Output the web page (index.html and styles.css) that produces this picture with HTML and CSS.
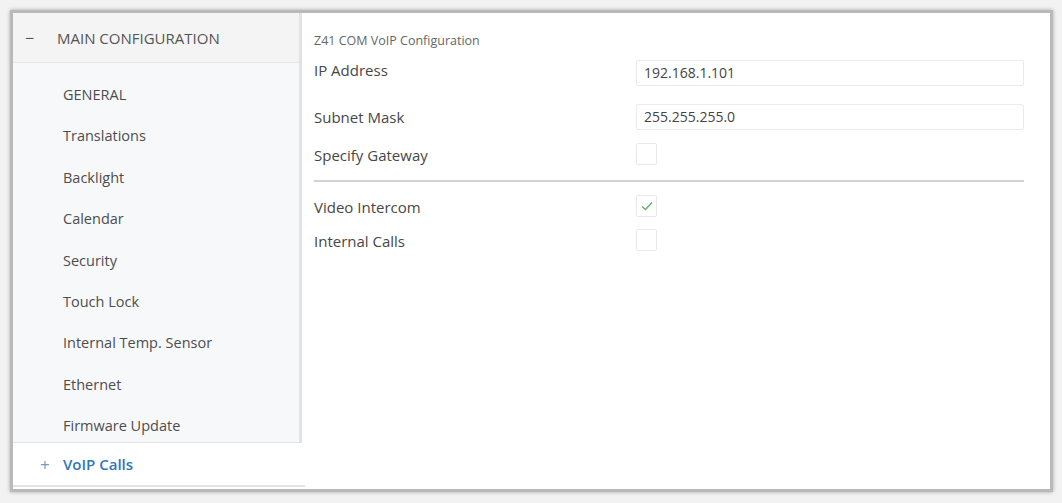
FILE: index.html
```html
<!DOCTYPE html>
<html>
<head>
<meta charset="utf-8">
<link rel="stylesheet" href="styles.css">
</head>
<body>
<div class="frame">
  <aside class="sidebar">
    <div class="tree">
      <div class="tree-head"><span class="toggle">−</span><span class="head-label">MAIN CONFIGURATION</span></div>
      <ul class="tree-items">
        <li>GENERAL</li>
        <li>Translations</li>
        <li>Backlight</li>
        <li>Calendar</li>
        <li>Security</li>
        <li>Touch Lock</li>
        <li>Internal Temp. Sensor</li>
        <li>Ethernet</li>
        <li>Firmware Update</li>
      </ul>
    </div>
    <div class="voip"><span class="toggle plus">+</span><span class="voip-label">VoIP Calls</span></div>
  </aside>
  <main class="content">
    <div class="title">Z41 COM VoIP Configuration</div>
    <div class="row r-ip"><span class="label">IP Address</span><div class="input">192.168.1.101</div></div>
    <div class="row r-mask"><span class="label">Subnet Mask</span><div class="input">255.255.255.0</div></div>
    <div class="row r-gw"><span class="label">Specify Gateway</span><div class="check"></div></div>
    <hr class="sep">
    <div class="row r-video"><span class="label">Video Intercom</span><div class="check"><svg width="14" height="12" viewBox="0 0 14 12"><path d="M2 6.5 L5.5 9.5 L12 2.5" fill="none" stroke="#6aae6a" stroke-width="1.4"/></svg></div></div>
    <div class="row r-int"><span class="label">Internal Calls</span><div class="check"></div></div>
  </main>
</div>
</body>
</html>
```
FILE: styles.css
```css
html, body {
  margin: 0;
  padding: 0;
  background: #f2f2f2;
}
body {
  width: 1062px;
  height: 503px;
  padding: 10px 0 0 10px;
  box-sizing: border-box;
  font-family: "Open Sans", "Noto Sans", sans-serif;
  color: #444;
}
.frame {
  width: 1037px;
  height: 476px;
  border: 3px solid #b9b9b9;
  box-shadow: 0 0 4px rgba(0,0,0,0.3);
  background: #fff;
  display: flex;
}
.sidebar {
  width: 289px;
  display: flex;
  flex-direction: column;
}
.tree {
  height: 430px;
  background: #f7f8fa;
  border-right: 3px solid #e2e2e2;
  border-bottom: 1px solid #e3e3e3;
  box-sizing: border-box;
}
.tree-head {
  height: 50px;
  background: #f4f4f4;
  border-bottom: 1px solid #e6e6e6;
  box-sizing: border-box;
  display: flex;
  align-items: center;
  font-size: 15px;
  color: #555;
}
.toggle {
  width: 44px;
  padding-left: 12px;
  box-sizing: border-box;
  font-size: 16px;
}
.tree-items {
  list-style: none;
  margin: 0;
  padding: 11px 0 0 50px;
}
.tree-items li {
  height: 41.4px;
  line-height: 41.4px;
  font-size: 14.5px;
  color: #4d4d4d;
}
.voip {
  height: 44px;
  display: flex;
  align-items: center;
  border-bottom: 2px solid #e2e2e2;
  box-sizing: border-box;
  margin-right: -3px;
}
.toggle.plus {
  padding-left: 27px;
  width: 50px;
  color: #6a9ccc;
  font-size: 17px;
}
.voip-label {
  font-weight: 600;
  font-size: 15px;
  color: #2f76bc;
}
.content {
  flex: 1;
  padding: 16px 26px 0 12px;
}
.title {
  font-size: 12.5px;
  color: #666;
  height: 24px;
  line-height: 24px;
}
.row {
  display: grid;
  grid-template-columns: 322px 1fr;
  align-items: center;
  font-size: 15px;
  color: #474747;
}
.r-ip {
  height: 26px;
  margin-top: 7px;
}
.r-ip .label {
  position: relative;
  top: -3px;
}
.r-mask {
  height: 26px;
  margin-top: 18px;
}
.r-gw {
  height: 22px;
  margin-top: 13px;
}
.r-video {
  height: 22px;
  margin-top: 13px;
}
.r-int {
  height: 22px;
  margin-top: 12px;
}
.r-gw .label,
.r-video .label,
.r-int .label {
  position: relative;
  top: 1px;
}
.input {
  height: 26px;
  border: 1px solid #ebebeb;
  border-radius: 2px;
  box-sizing: border-box;
  padding-left: 7px;
  line-height: 24px;
  font-size: 14px;
  color: #444;
}
.check {
  width: 21px;
  height: 22px;
  border: 1px solid #e9e9e9;
  border-radius: 2px;
  box-sizing: border-box;
  display: flex;
  align-items: center;
  justify-content: center;
}
.sep {
  border: 0;
  border-top: 2px solid #d2d2d2;
  margin: 15px 0 0 0;
}
```
